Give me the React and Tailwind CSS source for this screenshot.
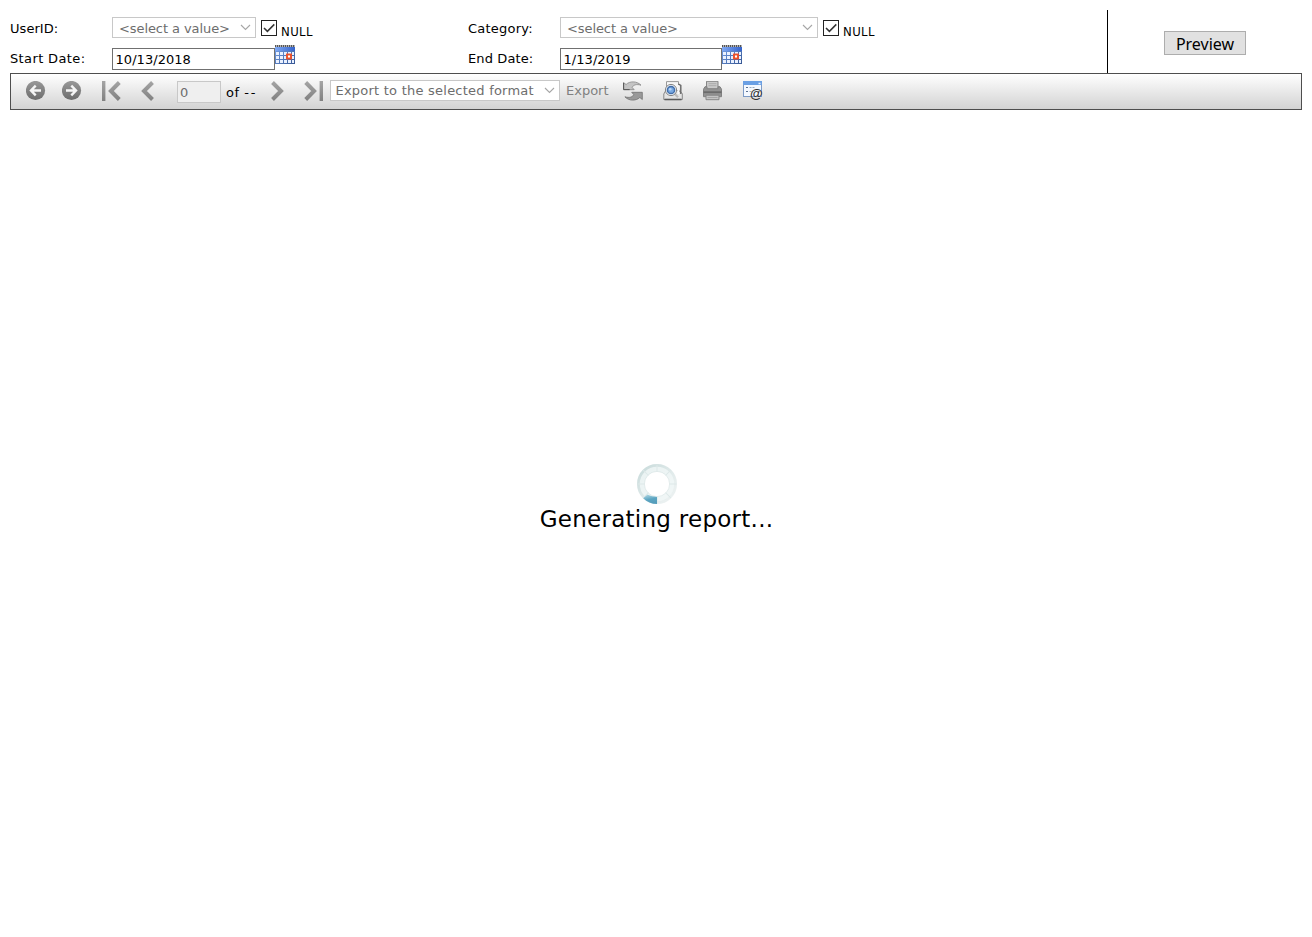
import React from "react";

const verdana = "font-['DejaVu_Sans',sans-serif]";

function Chevron() {
  return (
    <svg width="11" height="7" viewBox="0 0 11 7" className="shrink-0" fill="none" stroke="#a6a6a6" strokeWidth="1.1">
      <path d="M1 1l4.5 4.5L10 1" />
    </svg>
  );
}

function NullCheck() {
  return (
    <label className="ml-[5px] mt-[10px] flex items-start">
      <svg width="16" height="16" viewBox="0 0 16 16" fill="none">
        <rect x=".5" y=".5" width="15" height="15" fill="#fff" stroke="#222" />
        <path d="M3 8l3.4 3.4L13.3 4.4" stroke="#333" strokeWidth="1.5" />
      </svg>
      <span className="ml-[4px] mt-[4px] text-[13px] leading-[16px] tracking-[0.4px] font-['DejaVu_Sans_Condensed','DejaVu_Sans',sans-serif]">NULL</span>
    </label>
  );
}

function Calendar() {
  const cols = [1, 5, 9, 13, 17];
  const rows = [7, 11, 15];
  return (
    <svg width="20" height="20" viewBox="0 0 20 20" className="mt-[-3px] shrink-0">
      <defs>
        <linearGradient id="cal" x1="0" y1="0" x2="1" y2="1">
          <stop offset="0" stopColor="#77a5ee" />
          <stop offset="1" stopColor="#365692" />
        </linearGradient>
        <linearGradient id="calTop" x1="0" y1="0" x2="1" y2="0">
          <stop offset="0" stopColor="#7fa9f4" />
          <stop offset="1" stopColor="#3563ca" />
        </linearGradient>
      </defs>
      <rect y="1" width="20" height="18" fill="url(#cal)" />
      <rect y="2" width="20" height="4" fill="url(#calTop)" />
      <rect width="20" height="2" fill="#b4b4b4" />
      <path d="M0 1h20" stroke="#555" strokeWidth="2" strokeDasharray="1 1" />
      {rows.map((y) => cols.map((x) => <rect key={x + "-" + y} x={x} y={y} width={x === 17 ? 2 : 3} height="3" fill="#eaf1ff" />))}
      <rect x="12" y="9.5" width="4" height="4" fill="#fff" stroke="#ee5028" strokeWidth="1.9" />
    </svg>
  );
}

function Field({ value, width }) {
  return (
    <div className="flex h-[22px]">
      <div className={"flex h-[22px] items-center border border-[#707070] bg-white pl-[2.5px] pt-px text-[13px] tracking-[0.05px] " + width}>{value}</div>
      <Calendar />
    </div>
  );
}

function Select({ text, width }) {
  return (
    <div className={"mt-[7px] flex h-[21px] items-center justify-between border border-[#c8c8c8] bg-white pl-[6px] pr-[4px] text-[13px] text-[#6d6d6d] " + width}>
      <span className="mt-[2px] whitespace-nowrap tracking-[-0.08px]">{text}</span>
      <Chevron />
    </div>
  );
}

function RoundArrow({ right }) {
  return (
    <svg width="20" height="20" viewBox="0 0 20 20">
      <circle cx="9.5" cy="9.5" r="9.6" fill="url(#disc)" />
      <path d={right ? "M4 9.5H13.5M9.3 4.700l4.700 4.800-4.700 4.800" : "M15 9.5H5.5M9.700 4.700L5 9.5l4.700 4.800"} fill="none" stroke="#f5f5f5" strokeWidth="2.4" />
    </svg>
  );
}

function NavArrow({ right, bar }) {
  return (
    <svg width="20" height="20" viewBox="0 0 20 20" fill="none" stroke="url(#steel)" strokeWidth="4">
      <g transform={right ? "translate(20 0) scale(-1 1)" : undefined}>
        <path d={bar ? "M18.3 1.5L9.900 10l8.400 8.500" : "M15.500 1.5L7 10l8.500 8.500"} />
        {bar && <rect x="1" y="0" width="3.4" height="20" fill="url(#steel)" stroke="none" />}
      </g>
    </svg>
  );
}

function Refresh() {
  return (
    <svg width="20" height="20" viewBox="0 0 20 20" strokeLinejoin="round">
      <path d="M.5 1.500l2.600 2C6.500-.1 14-.1 18 4.200c-4.500-1.400-8-.2-8.800 2.300l2 2.200H.7z" fill="#c4c4c4" stroke="#858585" strokeWidth=".8" />
      <path d="M19.300 18.500l-2.500-2c-3.700 3.600-11 3.600-14.900-.700 4.500 1.400 8 .2 8.800-2.300l-2-2.200h10.600z" fill="#999" stroke="#707070" strokeWidth=".8" />
      <path d="M.6 2v6.600h6" fill="none" stroke="#555" strokeWidth="1" />
    </svg>
  );
}

function PrintPreview() {
  return (
    <svg width="20" height="20" viewBox="0 0 20 20">
      <path d="M3.500 .6h12v10h-12z" fill="#f7f7f7" stroke="#999" />
      <path d="M.800 13l2-3.500h13l3.500 3v6H.8z" fill="#e4e4e4" stroke="#888" />
      <path d="M1.500 18.500h17" stroke="#5a5a5a" strokeWidth="1.600" />
      <path d="M15.500 3l2.300 1.500v8.500" fill="none" stroke="#666" strokeWidth="1.400" />
      <path d="M15.200 4v9" stroke="#fafafa" strokeWidth="1.500" />
      <path d="M11 12l4 4.300" stroke="#bbb" strokeWidth="2.200" />
      <circle cx="8" cy="9" r="5.600" fill="#edf3fa" stroke="#858585" strokeWidth="1" />
      <circle cx="8" cy="9" r="3.600" fill="#79a9e2" stroke="#416da9" strokeWidth="1.500" />
      <circle cx="7.200" cy="8.200" r="1.300" fill="#b7d7fa" />
    </svg>
  );
}

function Printer() {
  return (
    <svg width="20" height="20" viewBox="0 0 20 20">
      <g transform="translate(-.5 -.3)">
        <path d="M4 8V.600h11.500V8" fill="#c9c9c9" stroke="#858585" />
        <path d="M6 3h8M6 5h8" stroke="#aaa" />
        <path d="M2.500 6h2v2h11V6h2l1.500 2.500v7.500H1V8.500z" fill="#929292" stroke="#808080" />
        <path d="M1 11.500h18" stroke="#6b6b6b" strokeWidth="1.800" />
        <path d="M3.500 14.500h13V19h-13z" fill="#c4c4c4" stroke="#858585" />
        <path d="M5 16.800h10" stroke="#a5a5a5" />
      </g>
    </svg>
  );
}

function MailReport() {
  return (
    <div className="relative h-5 w-5">
      <svg width="20" height="20" viewBox="0 0 20 20">
        <rect x=".5" y=".5" width="18" height="15" fill="#f5f9ff" stroke="#7d9bc6" />
        <path d="M0 2h19" stroke="#6ba0e4" strokeWidth="4" />
        <path d="M15.500 2.500h2" stroke="#eef5ff" strokeWidth="1.500" />
        <path d="M3 6.500h2M3 10.500h2" stroke="#5b7394" strokeWidth="1.200" />
        <path d="M6.500 6.500h6M6.500 10.500h3" stroke="#9cacbf" strokeDasharray="2 1" />
      </svg>
      <span className="absolute left-[7px] top-[6px] text-[13px] font-bold leading-[14px] text-[#333] font-['Liberation_Sans',sans-serif]">@</span>
    </div>
  );
}

function Spinner() {
  const spokes = [0, 45, 90, 135, 180, 225, 270, 315];
  return (
    <svg width="40" height="40" viewBox="0 0 40 40" fill="none" className="ml-[2px]">
      <defs>
        <linearGradient id="ring" x1="0" y1="0" x2="1" y2="1">
          <stop offset="0" stopColor="#cadcdc" />
          <stop offset=".6" stopColor="#e3ecec" />
          <stop offset="1" stopColor="#edf2f2" />
        </linearGradient>
        <linearGradient id="blue" x1="0" y1="0" x2=".3" y2="1">
          <stop offset="0" stopColor="#b9dce6" />
          <stop offset=".6" stopColor="#5ba5c2" />
          <stop offset="1" stopColor="#559dbb" />
        </linearGradient>
      </defs>
      <circle cx="20" cy="20" r="16.300" stroke="url(#ring)" strokeWidth="7.400" />
      <circle cx="20" cy="20" r="15" stroke="#f1f7f7" strokeWidth="4.500" opacity=".8" />
      {spokes.map((a) => (
        <path key={a} d="M20 .5V8" transform={`rotate(${a} 20 20)`} stroke="#dde8e8" strokeWidth="1" />
      ))}
      <circle cx="20" cy="20" r="12.600" stroke="#e0eaea" strokeWidth=".8" />
      <path d="M6.200 34.200L10.500 30.500c3 1.500 6 2 9.500 2.500V40c-5.500 0-10-2-13.800-5.800z" fill="url(#blue)" />
    </svg>
  );
}

export default function App() {
  return (
    <div className={"flex h-screen w-full flex-col overflow-hidden bg-white p-[10px] text-black " + verdana}>
      <svg width="0" height="0" className="absolute">
        <defs>
          <linearGradient id="disc" x1="0" y1="0" x2="0" y2="1">
            <stop offset="0" stopColor="#999" />
            <stop offset="1" stopColor="#6c6c6c" />
          </linearGradient>
          <linearGradient id="steel" gradientUnits="userSpaceOnUse" x1="0" y1="0" x2="0" y2="20">
            <stop offset="0" stopColor="#a5a5a5" />
            <stop offset="1" stopColor="#808080" />
          </linearGradient>
        </defs>
      </svg>
      <div className="flex h-[63px] shrink-0">
        <div className="grid w-[1097px] grid-cols-[102px_356px_92px_1fr] grid-rows-[38px_25px] text-[13px] leading-[16px]">
          <span className="mt-[11px] tracking-[0.05px]">UserID:</span>
          <div className="flex"><Select text="<select a value>" width="w-[144px]" /><NullCheck /></div>
          <span className="mt-[11px] tracking-[0.22px]">Category:</span>
          <div className="flex"><Select text="<select a value>" width="w-[258px]" /><NullCheck /></div>
          <span className="mt-[3px] tracking-[0.37px]">Start Date:</span>
          <Field value="10/13/2018" width="w-[163px]" />
          <span className="mt-[3px] tracking-[0.12px]">End Date:</span>
          <Field value="1/13/2019" width="w-[162px]" />
        </div>
        <div className="flex flex-1 justify-center border-l border-black pt-[21px]">
          <button className="h-[24px] w-[82px] border border-[#adadad] bg-[#e1e1e1] pt-px text-[16px] leading-[22px] font-['Noto_Sans',sans-serif]">Preview</button>
        </div>
      </div>
      <div className="flex h-[37px] shrink-0 items-start border border-[#4e4e4e] bg-linear-to-b from-white to-[#d3d3d3] pt-[7px] text-[13px] leading-[16px]">
        <div className="ml-[15px] flex gap-[16px]"><RoundArrow /><RoundArrow right /></div>
        <div className="ml-[19px] flex gap-[16px]"><NavArrow bar /><NavArrow /></div>
        <div className="ml-[20px] flex h-[22px] w-[44px] items-center border border-[#c8c8c8] bg-[#efefef] pl-[2px] pt-px text-[#6d6d6d]">0</div>
        <span className="ml-[5px] mt-[4px] w-[31px] whitespace-nowrap tracking-[0.5px]">of <span className="tracking-[2px]">--</span></span>
        <div className="ml-[11px] flex gap-[16px]"><NavArrow right /><NavArrow right bar /></div>
        <div className="-mt-px ml-[6px] flex h-[21px] w-[230px] items-center justify-between border border-[#c8c8c8] bg-white pl-[4.5px] pr-[4px] text-[#6d6d6d]">
          <span className="whitespace-nowrap tracking-[0.23px]">Export to the selected format</span>
          <Chevron />
        </div>
        <span className="ml-[6px] mt-[2px] w-[43px] whitespace-nowrap text-[#808080]">Export</span>
        <div className="ml-[14px] flex gap-[20px]"><Refresh /><PrintPreview /><Printer /><MailReport /></div>
      </div>
      <div className="flex flex-1 flex-col items-center pt-[354px]">
        <Spinner />
        <div className="ml-px text-[23px] leading-[30px] tracking-[0.27px]">Generating report...</div>
      </div>
    </div>
  );
}
